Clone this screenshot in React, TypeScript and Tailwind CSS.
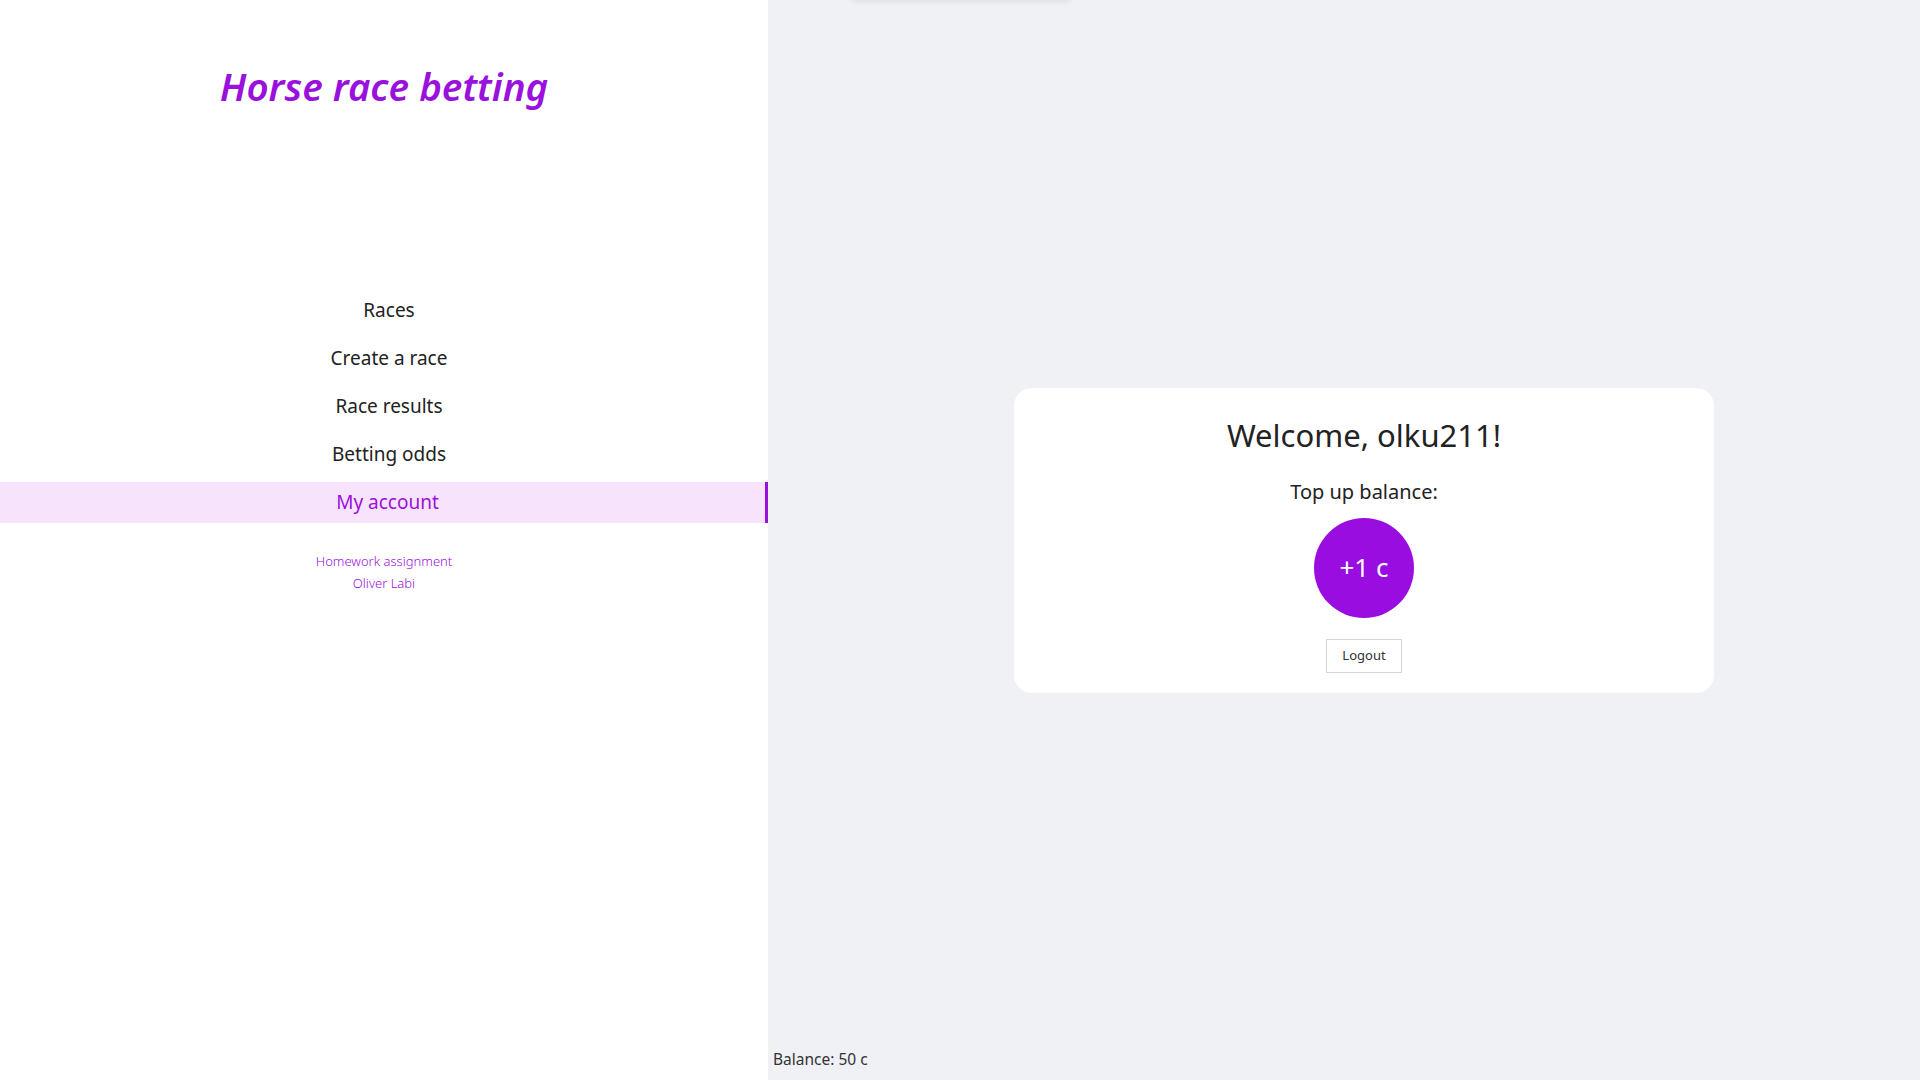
import { useState } from 'react';

// 경마 베팅 — 내 계정 페이지 (사이드바 + 계정 카드)

const NAV_ITEMS = ['Races', 'Create a race', 'Race results', 'Betting odds', 'My account'];

const Sidebar = ({ active }: { active: string }) => (
  <aside className="w-[768px] h-screen shrink-0 bg-white flex flex-col">
    <h1 className="m-0 mt-[58px] text-center text-[38.5px] leading-[56px] font-semibold italic text-[#9a10dc]">
      Horse race betting
    </h1>

    <nav className="mt-[169px] flex flex-col">
      {NAV_ITEMS.map((item) => {
        const isActive = item === active;
        return (
          <a
            key={item}
            className={
              isActive
                ? 'h-[41px] mt-[7px] pl-[10px] flex items-center justify-center text-[19px] text-[#9a10dc] bg-[#f8e3fd] border-r-[3px] border-[#9a10dc] cursor-pointer'
                : 'h-[41px] mt-[7px] pl-[10px] flex items-center justify-center text-[19px] text-[#222] cursor-pointer'
            }
          >
            {item}
          </a>
        );
      })}
    </nav>

    <div className="mt-[27px] flex flex-col items-center text-[13px] leading-[22px] font-light text-[#9a10dc]">
      <span>Homework assignment</span>
      <span>Oliver Labi</span>
    </div>
  </aside>
);

const App = () => {
  const [balance, setBalance] = useState(50);

  return (
    <div
      className="flex w-full h-screen overflow-hidden bg-[#f0f1f5]"
      style={{ fontFamily: '"Segoe UI", "Noto Sans", "Open Sans", sans-serif' }}
    >
      <Sidebar active="My account" />

      <main className="relative flex-1 h-screen flex flex-col">
        {/* 상단에 살짝 보이는 떠 있는 요소 */}
        <div className="absolute left-[82px] top-[-40px] w-[222px] h-[40px] rounded-lg bg-[#f0f1f5] shadow-[0_2px_6px_rgba(0,0,0,0.08)]" />

        {/* 하단 잔액 줄 높이만큼 위쪽 패딩 → 카드가 화면 정중앙 */}
        <div className="flex-1 flex items-center justify-center pl-[40px] pt-[32px]">
          <div className="w-[700px] rounded-[18px] bg-white flex flex-col items-center pt-[24px] pb-[20px]">
            <h2 className="m-0 text-[31px] leading-[46px] font-normal text-[#222]">Welcome, olku211!</h2>
            <p className="m-0 mt-[20px] text-[20px] leading-[28px] text-[#222]">Top up balance:</p>
            <button
              onClick={() => setBalance((b) => b + 1)}
              className="mt-[12px] w-[100px] h-[100px] rounded-full bg-[#9a0de0] text-white text-[26px] flex items-center justify-center cursor-pointer"
            >
              +1 c
            </button>
            <button className="mt-[21px] w-[76px] h-[34px] border border-[#d4d4d4] bg-white text-[13px] text-[#333] cursor-pointer">
              Logout
            </button>
          </div>
        </div>

        <div className="px-[5px] pb-[10px] text-[15.5px] leading-[22px] text-[#333]">Balance: {balance} c</div>
      </main>
    </div>
  );
};

export default App;
